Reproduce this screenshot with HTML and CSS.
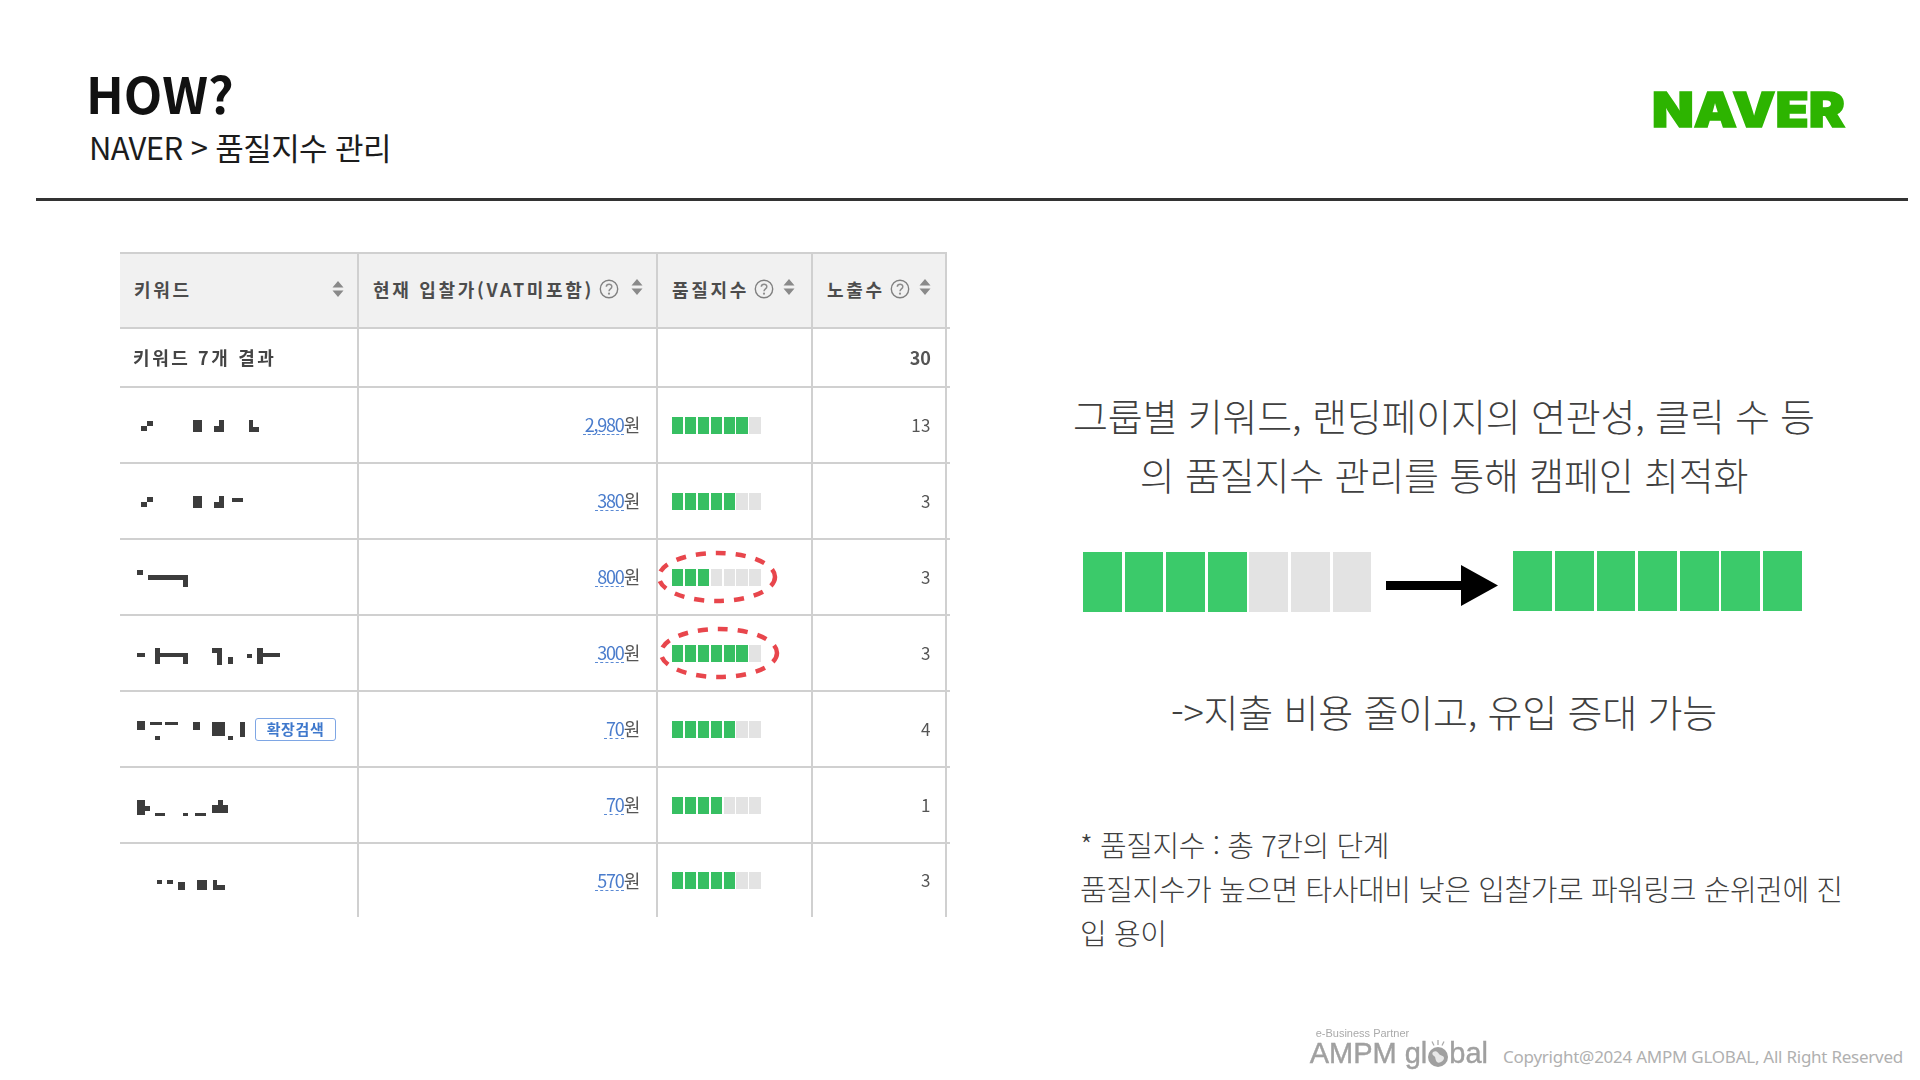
FILE: index.html
```html
<!DOCTYPE html>
<html lang="ko">
<head>
<meta charset="utf-8">
<title>HOW? NAVER 품질지수 관리</title>
<link rel="stylesheet" href="styles.css">
</head>
<body>
<svg class="defs" width="0" height="0" aria-hidden="true">
  <symbol id="sort" viewBox="0 0 12 16"><path d="M6 0l5.500 6.500H.5zM6 16L.5 9.500h11z"/></symbol>
  <symbol id="help" viewBox="0 0 20 20"><circle cx="10" cy="10" r="8.700" fill="none" stroke="#808080" stroke-width="1.400"/><path d="M7.300 7.800c.2-3.400 5.600-3.300 5.500-.1 0 2.200-2.800 2.200-2.800 4.600" fill="none" stroke="#8c8c8c" stroke-width="1.500"/><circle cx="10" cy="14.700" r="1.100" fill="#8c8c8c"/></symbol>
</svg>
<main class="slide">
  <header class="head">
    <div class="titles">
      <h1>HOW?</h1>
      <p>NAVER &gt; 품질지수 관리</p>
    </div>
    <svg class="naver" width="194" height="40" viewBox="0 0 194 40"><text x="0" y="36" textLength="193" lengthAdjust="spacingAndGlyphs">NAVER</text></svg>
  </header>
  <section class="body">
    <table class="kw">
      <colgroup><col class="c1"><col class="c2"><col class="c3"><col class="c4"><col class="c5"></colgroup>
      <thead>
        <tr>
          <th><div class="th"><span>키워드</span><svg class="sort push" width="12" height="16"><use href="#sort"/></svg></div></th>
          <th><div class="th"><span>현재 입찰가(VAT미포함)</span><svg class="help" width="20" height="20"><use href="#help"/></svg><svg class="sort raise wide" width="12" height="16"><use href="#sort"/></svg></div></th>
          <th><div class="th"><span>품질지수</span><svg class="help" width="20" height="20"><use href="#help"/></svg><svg class="sort raise" width="12" height="16"><use href="#sort"/></svg></div></th>
          <th><div class="th"><span>노출수</span><svg class="help" width="20" height="20"><use href="#help"/></svg><svg class="sort raise" width="12" height="16"><use href="#sort"/></svg></div></th>
          <th class="stub"></th>
        </tr>
      </thead>
      <tbody>
        <tr class="sum"><td class="k b">키워드 7개 결과</td><td></td><td></td><td class="n b">30</td><td class="stub"></td></tr>
        <tr>
          <td class="k"><svg class="mask" width="130" height="30"><path d="M14 11h6v5h-6zM8 16h6v5H8zM60 10h9v12h-9zM86 10h5v7h-5zM81 16h10v6H81zM116 10h4v7h-4zM116 17h10v5h-10z"/></svg></td>
          <td class="m"><a>2,980</a>원</td>
          <td class="q"><div class="qbar"><i class="on"></i><i class="on"></i><i class="on"></i><i class="on"></i><i class="on"></i><i class="on"></i><i></i></div></td>
          <td class="n">13</td><td class="stub"></td>
        </tr>
        <tr>
          <td class="k"><svg class="mask" width="130" height="30"><path d="M14 11h6v5h-6zM8 16h6v5H8zM60 10h9v12h-9zM86 10h5v7h-5zM81 16h10v6H81zM99 12h11v4H99z"/></svg></td>
          <td class="m"><a>380</a>원</td>
          <td class="q"><div class="qbar"><i class="on"></i><i class="on"></i><i class="on"></i><i class="on"></i><i class="on"></i><i></i><i></i></div></td>
          <td class="n">3</td><td class="stub"></td>
        </tr>
        <tr>
          <td class="k"><svg class="mask" width="130" height="30"><path d="M4 8h6v5H4zM15 13h40v5H15zM50 18h5v7h-5z"/></svg></td>
          <td class="m"><a>800</a>원</td>
          <td class="q"><div class="qbar"><i class="on"></i><i class="on"></i><i class="on"></i><i></i><i></i><i></i><i></i></div>
            <svg class="ring r1" width="124" height="56"><ellipse cx="62" cy="28" rx="58" ry="24"/></svg></td>
          <td class="n">3</td><td class="stub"></td>
        </tr>
        <tr>
          <td class="k"><svg class="mask" width="150" height="30"><path d="M4 15h8v4H4zM22 10h5v16h-5zM27 15h28v4H27zM50 19h5v7h-5zM79 10h10v5H79zM84 15h5v12h-5zM95 19h5v7h-5zM114 16h5v4h-5zM124 10h6v16h-6zM130 15h17v4h-17z"/></svg></td>
          <td class="m"><a>300</a>원</td>
          <td class="q"><div class="qbar"><i class="on"></i><i class="on"></i><i class="on"></i><i class="on"></i><i class="on"></i><i class="on"></i><i></i></div>
            <svg class="ring r2" width="124" height="56"><ellipse cx="62" cy="28" rx="58" ry="24"/></svg></td>
          <td class="n">3</td><td class="stub"></td>
        </tr>
        <tr>
          <td class="k"><div class="kwrow"><svg class="mask" width="113" height="30"><path d="M4 7h8v9H4zM17 8h12v3H17zM22 22h5v4h-5zM32 8h13v3H32zM60 8h7v8h-7zM79 8h13v14H79zM95 22h5v4h-5zM107 8h5v15h-5z"/></svg><span class="badge">확장검색</span></div></td>
          <td class="m"><a>70</a>원</td>
          <td class="q"><div class="qbar"><i class="on"></i><i class="on"></i><i class="on"></i><i class="on"></i><i class="on"></i><i></i><i></i></div></td>
          <td class="n">4</td><td class="stub"></td>
        </tr>
        <tr>
          <td class="k"><svg class="mask" width="130" height="30"><path d="M4 10h8v15H4zM12 16h5v5h-5zM22 23h10v3H22zM50 23h5v3h-5zM62 23h11v3H62zM79 15h16v8H79zM85 10h5v6h-5z"/></svg></td>
          <td class="m"><a>70</a>원</td>
          <td class="q"><div class="qbar"><i class="on"></i><i class="on"></i><i class="on"></i><i class="on"></i><i></i><i></i><i></i></div></td>
          <td class="n">1</td><td class="stub"></td>
        </tr>
        <tr class="last">
          <td class="k"><svg class="mask" width="130" height="30"><path d="M24 14h5v4h-5zM34 14h6v4h-6zM45 16h7v8h-7zM64 14h10v10H64zM80 14h4v10h-4zM84 19h8v5h-8z"/></svg></td>
          <td class="m"><a>570</a>원</td>
          <td class="q"><div class="qbar"><i class="on"></i><i class="on"></i><i class="on"></i><i class="on"></i><i class="on"></i><i></i><i></i></div></td>
          <td class="n">3</td><td class="stub"></td>
        </tr>
      </tbody>
    </table>
    <div class="panel">
      <p class="lead">그룹별 키워드, 랜딩페이지의 연관성, 클릭 수 등<br>의 품질지수 관리를 통해 캠페인 최적화</p>
      <div class="compare">
        <div class="big low"><i class="on"></i><i class="on"></i><i class="on"></i><i class="on"></i><i></i><i></i><i></i></div>
        <svg class="arrow" width="112" height="41" viewBox="0 0 112 41"><path d="M0 16h75V0l37 20.500L75 41V25H0z"/></svg>
        <div class="big high"><i class="on"></i><i class="on"></i><i class="on"></i><i class="on"></i><i class="on"></i><i class="on"></i><i class="on"></i></div>
      </div>
      <p class="lead effect">-&gt;지출 비용 줄이고, 유입 증대 가능</p>
      <p class="note">* 품질지수 : 총 7칸의 단계<br>품질지수가 높으면 타사대비 낮은 입찰가로 파워링크 순위권에 진<br>입 용이</p>
    </div>
  </section>
  <footer class="foot">
    <div class="brand">
      <span class="tag">e-Business Partner</span>
      <span class="ampm">AMPM gl<svg class="globe" width="22" height="30" viewBox="0 0 22 30"><circle cx="11" cy="19" r="10" fill="#a0a0a0"/><path d="M6 14c3-2 5 0 6 2s5 1 5 4-5 6-7 4-1-5-3-6-2-3-1-4z" fill="#e8e8e8"/><path d="M11 2v5M5 3.500l2 4M17 3.500l-2 4" stroke="#aaa" stroke-width="1.300"/></svg>bal</span>
    </div>
    <span class="copy">Copyright@2024 AMPM GLOBAL, All Right Reserved</span>
  </footer>
</main>
</body>
</html>
```

FILE: styles.css
```css
* { box-sizing: border-box; }
html, body { margin: 0; padding: 0; background: #fff; }
body { font-family: "Noto Sans CJK KR", "Noto Sans", sans-serif; color: #222; }
.defs { position: absolute; }

.slide { width: 1920px; height: 1080px; display: flex; flex-direction: column; overflow: hidden; }

/* header */
.head { height: 201px; margin: 0 12px 0 36px; padding: 0 62px 0 50px; border-bottom: 3px solid #333; display: flex; justify-content: space-between; align-items: flex-start; }
.titles { padding-top: 57px; }
h1 { margin: 0; font-family: "Noto Sans CJK KR", sans-serif; font-weight: 700; font-size: 50px; line-height: 70px; color: #111; }
.titles p { margin: -3px 0 0 3px; font-size: 31px; line-height: 46px; letter-spacing: -.6px; color: #1c1c1c; }
.naver { margin-top: 91px; overflow: visible; }
.naver text { font-family: Inter, "Noto Sans", sans-serif; font-weight: 900; font-size: 48px; fill: #2db400; stroke: #2db400; stroke-width: 1.5px; }

/* layout */
.body { display: flex; align-items: flex-start; padding: 51px 0 0 120px; flex: 1; }

/* keyword table */
.kw { table-layout: fixed; width: 830px; border-collapse: separate; border-spacing: 0; filter: blur(.45px); font-size: 16px; color: #555; flex: none; }
.c1 { width: 239px; } .c2 { width: 299px; } .c3 { width: 155px; } .c4 { width: 134px; } .c5 { width: 3px; }
th, td { padding: 0; border-right: 2px solid #d0d0d0; border-bottom: 2px solid #d0d0d0; height: 76px; }
th { height: 77px; background: #f1f1f1; border-top: 2px solid #d0d0d0; font-weight: 700; text-align: left; }
.stub { border-right: 0; background: transparent; border-top: 0; }
.sum td { height: 59px; }
.last td { height: 73px; border-bottom: 0; }
.th { display: flex; align-items: center; padding: 0 13px 4px 14px; font-size: 18px; letter-spacing: 2.7px; color: #4c4c4c; white-space: nowrap; }
.help { margin-left: 5px; flex: none; }
.sort { fill: #8a8a8a; flex: none; }
.sort.raise { margin: -3px 0 0 9px; }
.sort.raise.wide { margin-left: 12px; }
.sort.push { margin-left: auto; }

.k { padding-left: 13px; }
.b { font-weight: 700; color: #444; font-size: 18px; letter-spacing: 2.6px; padding-bottom: 2px; }
.m { text-align: right; padding-right: 17px; padding-bottom: 2px; font-size: 18px; letter-spacing: -1.2px; color: #555; }
.m a { color: #4a7ccc; border-bottom: 1.5px dashed #5b8ad4; padding-left: 2px; line-height: 19px; display: inline-block; }
.n { text-align: right; padding-right: 14px; padding-bottom: 2px; color: #555; font-size: 17px; letter-spacing: .5px; }
.n.b { letter-spacing: 0; font-size: 18px; }
.mask { display: block; fill: #3c3c3c; filter: blur(.5px); flex: none; }
.kwrow { display: flex; align-items: center; gap: 9px; }
.badge { width: 81px; height: 23px; border: 1px solid #7ea6e4; border-radius: 3px; font-size: 15px; font-weight: 700; line-height: 20px; letter-spacing: .6px; color: #3e78cc; text-align: center; }

.q { position: relative; padding-left: 14px; }
.qbar { display: flex; gap: 1.6px; }
.qbar i { width: 11.3px; height: 17px; background: #e3e3e3; }
.qbar i.on { background: #37bf62; }
.ring { position: absolute; top: 9px; fill: none; stroke: #e8464c; stroke-width: 4.5; stroke-dasharray: 10 10; }
.r1 { left: -3px; }
.r2 { left: -1px; }

/* right panel */
.panel { width: 760px; margin-left: 114px; padding-top: 133px; color: #404040; flex: none; }
.lead { margin: 0; font-size: 38px; line-height: 59px; font-weight: 300; letter-spacing: -.2px; text-align: center; white-space: nowrap; }
.compare { display: flex; align-items: flex-start; height: 61px; margin: 48px 0 0 19px; }
.big { display: flex; gap: 2.8px; }
.big i { width: 38.8px; height: 60px; background: #e3e3e3; }
.big i.on { background: #3bca6a; }
.low { margin-top: 1px; }
.arrow { margin: 14px 0 0 15px; fill: #000; flex: none; }
.high { margin-left: 15px; }
.effect { margin-top: 69px; }
.note { margin: 82px 0 0 16px; font-size: 29px; line-height: 44px; font-weight: 300; letter-spacing: -.43px; white-space: nowrap; }

/* footer */
.foot { display: flex; justify-content: flex-end; align-items: flex-end; gap: 15px; padding: 0 17px 10px 0; }
.brand { display: flex; flex-direction: column; filter: blur(.35px); margin-bottom: 2px; }
.tag { font-family: "Liberation Sans", sans-serif; font-size: 11px; line-height: 10px; color: #aaa; padding-left: 6px; }
.ampm { display: flex; align-items: flex-end; font-family: "Liberation Sans", sans-serif; font-size: 29px; line-height: 30px; height: 30px; color: #a0a0a0; -webkit-text-stroke: .4px #a0a0a0; white-space: nowrap; }
.globe { flex: none; }
.copy { font-family: "Noto Sans", sans-serif; font-size: 17px; line-height: 26px; letter-spacing: -.25px; color: #b0b0b0; white-space: nowrap; }
```
